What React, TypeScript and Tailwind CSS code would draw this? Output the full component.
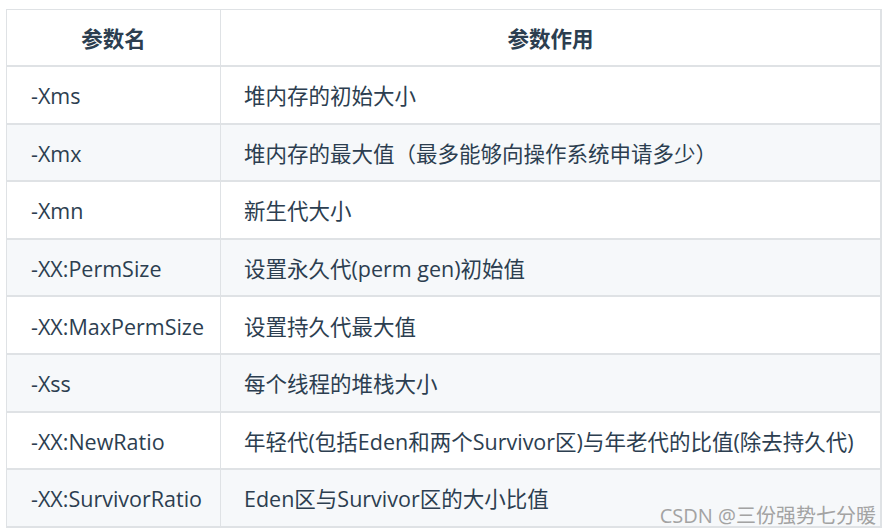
const rows: [string, string][] = [
  ['-Xms', '堆内存的初始大小'],
  ['-Xmx', '堆内存的最大值（最多能够向操作系统申请多少）'],
  ['-Xmn', '新生代大小'],
  ['-XX:PermSize', '设置永久代(perm gen)初始值'],
  ['-XX:MaxPermSize', '设置持久代最大值'],
  ['-Xss', '每个线程的堆栈大小'],
  ['-XX:NewRatio', '年轻代(包括Eden和两个Survivor区)与年老代的比值(除去持久代)'],
  ['-XX:SurvivorRatio', 'Eden区与Survivor区的大小比值'],
]

export default function App() {
  return (
    <div
      className="relative w-[890px] h-[532px] bg-white overflow-hidden pt-[9px] pl-[6px] text-[#2c3e50]"
      style={{ fontFamily: '"Open Sans", "Noto Sans CJK SC", sans-serif' }}
    >
      <div className="w-[876px] border-t border-l border-r-2 border-[#dfe2e5]">
        <div className="grid grid-cols-[214px_1fr] h-[57px] border-b-2 border-[#dfe2e5] font-bold text-[21.5px]">
          <div className="flex items-center justify-center pt-[3px] border-r border-[#dfe2e5]">参数名</div>
          <div className="flex items-center justify-center pt-[3px]">参数作用</div>
        </div>
        {rows.map(([name, desc], i) => (
          <div
            key={name}
            className={`grid grid-cols-[214px_1fr] h-[57.6px] border-b-2 border-[#dfe2e5] text-[21.5px] ${
              i % 2 === 1 ? 'bg-[#f6f8fa]' : 'bg-white'
            }`}
          >
            <div className="flex items-center pl-[24px] pt-[3px] border-r border-[#dfe2e5]">{name}</div>
            <div className="flex items-center pl-[23px] pt-[3px] whitespace-nowrap">{desc}</div>
          </div>
        ))}
      </div>
      <div className="absolute right-[14px] bottom-[6px] text-[20px] text-[#a3a3a3] leading-none">
        CSDN @三份强势七分暖
      </div>
    </div>
  )
}
